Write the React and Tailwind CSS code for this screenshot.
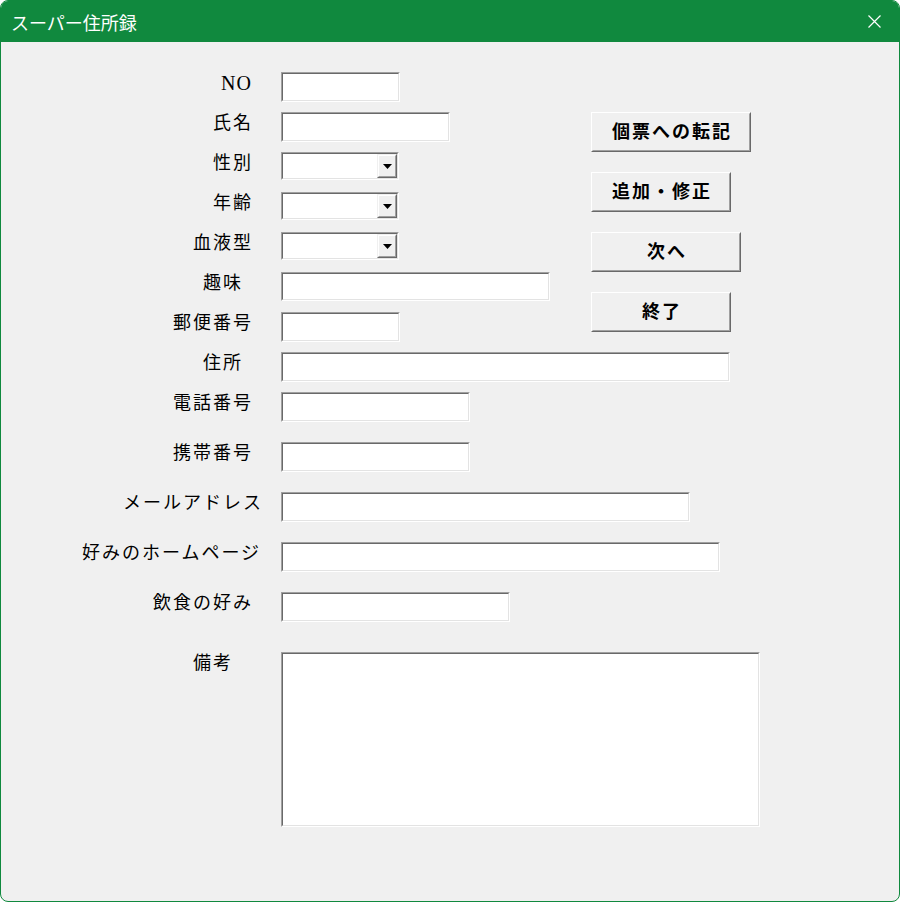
import React from "react";

const FONT = { fontFamily: '"Liberation Serif", "Noto Sans CJK JP", serif' };
const UI_FONT = { fontFamily: '"Noto Sans CJK JP", "Noto Sans", sans-serif' };

function Sunken({ w, h, children }) {
  return (
    <div
      className="border border-t-[#a0a0a0] border-l-[#a0a0a0] border-b-white border-r-white shrink-0"
      style={{ width: w, height: h }}
    >
      <div className="w-full h-full border border-t-[#696969] border-l-[#696969] border-b-[#e3e3e3] border-r-[#e3e3e3] bg-white flex justify-end items-stretch">
        {children}
      </div>
    </div>
  );
}

function Combo({ w }) {
  return (
    <Sunken w={w} h={28}>
      <div className="w-[20px] border border-t-[#f0f0f0] border-l-[#f0f0f0] border-b-[#696969] border-r-[#696969] bg-[#f0f0f0]">
        <div className="w-full h-full border border-t-white border-l-white border-b-[#a0a0a0] border-r-[#a0a0a0] flex items-center justify-center">
          <svg width="9" height="5" viewBox="0 0 9 5">
            <path d="M0 0 L9 0 L4.5 5 Z" fill="#000" />
          </svg>
        </div>
      </div>
    </Sunken>
  );
}

function Btn({ w, label }) {
  return (
    <div
      className="h-[40px] border border-t-white border-l-white border-b-[#696969] border-r-[#696969] bg-[#f0f0f0]"
      style={{ width: w }}
    >
      <div className="w-full h-full border border-t-[#f0f0f0] border-l-[#f0f0f0] border-b-[#a0a0a0] border-r-[#a0a0a0] flex items-center justify-center">
        <span className="text-[18px] font-bold tracking-[2px] text-black leading-none pl-[2px]" style={FONT}>
          {label}
        </span>
      </div>
    </div>
  );
}

function Row({ label, lx, h, field, latin }) {
  return (
    <div className="flex items-start" style={{ height: h }}>
      <div className="w-[281px] shrink-0" style={{ paddingLeft: lx }}>
        <div
          className={
            "h-[22px] leading-[22px] text-black whitespace-nowrap " +
            (latin ? "text-[20px] tracking-[1px]" : "text-[18px] tracking-[2px]")
          }
          style={FONT}
        >
          {label}
        </div>
      </div>
      {field}
    </div>
  );
}

export default function App() {
  const top = [
    { label: "NO", lx: 221, field: <Sunken w={119} h={30} />, latin: true },
    { label: "氏名", lx: 213, field: <Sunken w={169} h={30} /> },
    { label: "性別", lx: 213, field: <Combo w={118} /> },
    { label: "年齢", lx: 213, field: <Combo w={118} /> },
    { label: "血液型", lx: 193, field: <Combo w={118} /> },
    { label: "趣味", lx: 203, field: <Sunken w={269} h={29} /> },
    { label: "郵便番号", lx: 173, field: <Sunken w={119} h={30} /> },
  ];
  const rest = [
    { label: "住所", lx: 203, h: 40, field: <Sunken w={449} h={30} /> },
    { label: "電話番号", lx: 173, h: 50, field: <Sunken w={189} h={30} /> },
    { label: "携帯番号", lx: 173, h: 50, field: <Sunken w={189} h={30} /> },
    { label: "メールアドレス", lx: 123, h: 50, field: <Sunken w={409} h={30} /> },
    { label: "好みのホームページ", lx: 82, h: 50, field: <Sunken w={439} h={30} /> },
    { label: "飲食の好み", lx: 153, h: 60, field: <Sunken w={229} h={30} /> },
    { label: "備考", lx: 193, h: 176, field: <Sunken w={479} h={175} /> },
  ];
  return (
    <div className="w-[900px] h-[902px] bg-white">
      <div className="w-[900px] h-[902px] rounded-[8px] overflow-hidden border border-[#10893e] bg-[#f0f0f0] flex flex-col">
        <div className="h-[41px] bg-[#10893e] flex items-center justify-between shrink-0 pl-[10px] pr-[18px]">
          <span className="text-white text-[18px] leading-none" style={UI_FONT}>
            スーパー住所録
          </span>
          <svg width="13" height="13" viewBox="0 0 13 13">
            <path d="M0.5 0.5 L12.5 12.5 M12.5 0.5 L0.5 12.5" stroke="#fff" strokeWidth="1.2" />
          </svg>
        </div>
        <div className="pt-[30px] -ml-px">
          <div className="flex">
            <div className="w-[591px] flex flex-col shrink-0">
              {top.map((r) => (
                <Row key={r.label} {...r} h={40} />
              ))}
            </div>
            <div className="pt-[40px] flex flex-col gap-[20px]">
              <Btn w={160} label="個票への転記" />
              <Btn w={140} label="追加・修正" />
              <Btn w={150} label="次へ" />
              <Btn w={140} label="終了" />
            </div>
          </div>
          <div className="flex flex-col">
            {rest.map((r) => (
              <Row key={r.label} {...r} />
            ))}
          </div>
        </div>
      </div>
    </div>
  );
}
